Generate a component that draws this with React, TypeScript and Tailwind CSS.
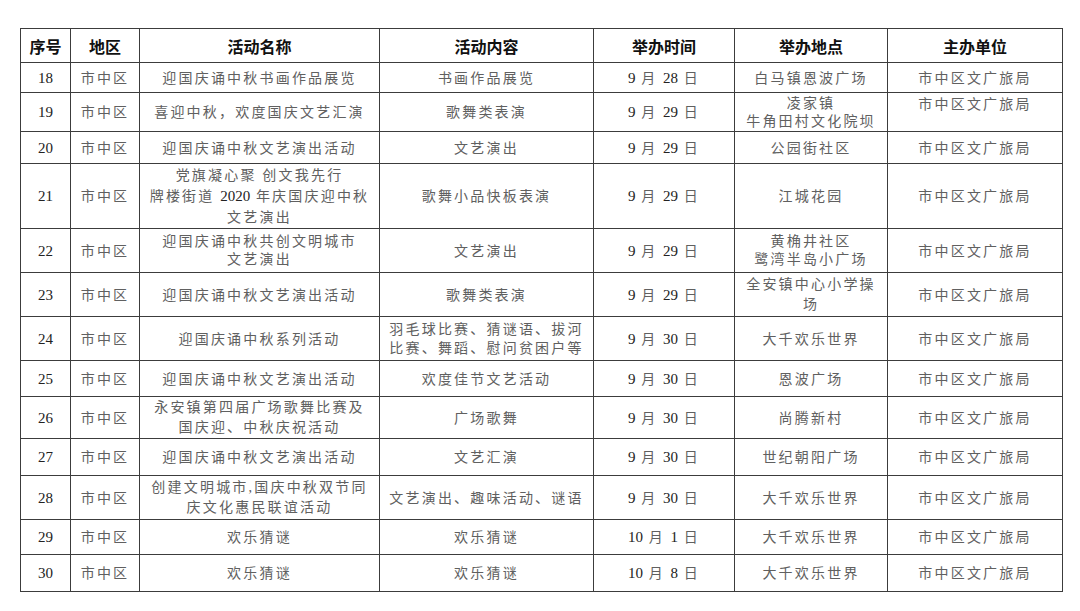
import React from "react";

type Row = {
  n: string;
  name: string[];
  content: string[];
  date: string;
  place: string[];
  h: string;
  nameLead?: string;
  contentLead?: string;
  placeLead?: string;
  unitTop?: boolean;
};

const L18 = "h-[18px] leading-[18px]";
const L19 = "h-[19px] leading-[19px]";
const L20 = "h-[20px] leading-[20px]";
const L21 = "h-[21px] leading-[21px]";

const rows: Row[] = [
  { n: "18", name: ["迎国庆诵中秋书画作品展览"], content: ["书画作品展览"], date: "9 月 28 日", place: ["白马镇恩波广场"], h: "h-[30px]" },
  { n: "19", name: ["喜迎中秋，欢度国庆文艺汇演"], content: ["歌舞类表演"], date: "9 月 29 日", place: ["凌家镇", "牛角田村文化院坝"], h: "h-[39px]", placeLead: L18, unitTop: true },
  { n: "20", name: ["迎国庆诵中秋文艺演出活动"], content: ["文艺演出"], date: "9 月 29 日", place: ["公园街社区"], h: "h-[32px]" },
  { n: "21", name: ["党旗凝心聚 创文我先行", "牌楼街道 2020 年庆国庆迎中秋", "文艺演出"], content: ["歌舞小品快板表演"], date: "9 月 29 日", place: ["江城花园"], h: "h-[65px]", nameLead: L21 },
  { n: "22", name: ["迎国庆诵中秋共创文明城市", "文艺演出"], content: ["文艺演出"], date: "9 月 29 日", place: ["黄桷井社区", "鹭湾半岛小广场"], h: "h-[44px]", nameLead: L18, placeLead: L18 },
  { n: "23", name: ["迎国庆诵中秋文艺演出活动"], content: ["歌舞类表演"], date: "9 月 29 日", place: ["全安镇中心小学操", "场"], h: "h-[44px]", placeLead: L20 },
  { n: "24", name: ["迎国庆诵中秋系列活动"], content: ["羽毛球比赛、猜谜语、拔河", "比赛、舞蹈、慰问贫困户等"], date: "9 月 30 日", place: ["大千欢乐世界"], h: "h-[44px]", contentLead: L19 },
  { n: "25", name: ["迎国庆诵中秋文艺演出活动"], content: ["欢度佳节文艺活动"], date: "9 月 30 日", place: ["恩波广场"], h: "h-[36px]" },
  { n: "26", name: ["永安镇第四届广场歌舞比赛及", "国庆迎、中秋庆祝活动"], content: ["广场歌舞"], date: "9 月 30 日", place: ["尚腾新村"], h: "h-[42px]", nameLead: L20 },
  { n: "27", name: ["迎国庆诵中秋文艺演出活动"], content: ["文艺汇演"], date: "9 月 30 日", place: ["世纪朝阳广场"], h: "h-[37px]" },
  { n: "28", name: ["创建文明城市,国庆中秋双节同", "庆文化惠民联谊活动"], content: ["文艺演出、趣味活动、谜语"], date: "9 月 30 日", place: ["大千欢乐世界"], h: "h-[44px]", nameLead: L20 },
  { n: "29", name: ["欢乐猜谜"], content: ["欢乐猜谜"], date: "10 月 1 日", place: ["大千欢乐世界"], h: "h-[35px]" },
  { n: "30", name: ["欢乐猜谜"], content: ["欢乐猜谜"], date: "10 月 8 日", place: ["大千欢乐世界"], h: "h-[37px]" },
];

function Runs({ text }: { text: string }) {
  const parts = text.split(/(\d+)/).filter((p) => p.length > 0);
  return (
    <>
      {parts.map((p, i) =>
        /^\d+$/.test(p) ? (
          <span key={i} className="text-[15px] tracking-normal text-[#222]">
            {p}
          </span>
        ) : (
          <span key={i} className="text-[14px] tracking-[2.2px] text-[#606060]">
            {p}
          </span>
        )
      )}
    </>
  );
}

function Lines({ lines, lead }: { lines: string[]; lead?: string }) {
  const cls = lead ?? L19;
  return (
    <>
      {lines.map((l, i) => (
        <div key={i} className={`${cls} overflow-visible`}>
          <Runs text={l} />
        </div>
      ))}
    </>
  );
}

const td =
  "border border-[#3c3c3c] p-0 pt-[1px] text-center align-middle whitespace-nowrap text-[14px]";
const th =
  "border border-[#3c3c3c] p-0 text-center align-middle whitespace-nowrap text-[16px] font-bold text-[#111] font-['Noto_Sans_CJK_SC',sans-serif] leading-[20px]";

export default function App() {
  return (
    <div className="w-[1080px] h-[611px] bg-white pt-[28px] pl-[20px]">
      <table className="table-fixed border-collapse w-[1042px] font-['Liberation_Serif','Noto_Sans_CJK_SC',serif] leading-[19px]">
        <colgroup>
          <col className="w-[50px]" />
          <col className="w-[69px]" />
          <col className="w-[240px]" />
          <col className="w-[214px]" />
          <col className="w-[141px]" />
          <col className="w-[153px]" />
          <col className="w-[175px]" />
        </colgroup>
        <thead>
          <tr className="h-[34px]">
            <th className={th}>序号</th>
            <th className={th}>地区</th>
            <th className={th}>活动名称</th>
            <th className={th}>活动内容</th>
            <th className={th}>举办时间</th>
            <th className={th}>举办地点</th>
            <th className={th}>主办单位</th>
          </tr>
        </thead>
        <tbody>
          {rows.map((r) => (
            <tr key={r.n} className={r.h}>
              <td className={td}>
                <Lines lines={[r.n]} />
              </td>
              <td className={td}>
                <Lines lines={["市中区"]} />
              </td>
              <td className={td}>
                <Lines lines={r.name} lead={r.nameLead} />
              </td>
              <td className={td}>
                <Lines lines={r.content} lead={r.contentLead} />
              </td>
              <td className={td}>
                <Lines lines={[r.date]} />
              </td>
              <td className={td}>
                <Lines lines={r.place} lead={r.placeLead} />
              </td>
              <td className={`${td} ${r.unitTop ? "!align-top !pt-[2px]" : ""}`}>
                <Lines lines={["市中区文广旅局"]} />
              </td>
            </tr>
          ))}
        </tbody>
      </table>
    </div>
  );
}
